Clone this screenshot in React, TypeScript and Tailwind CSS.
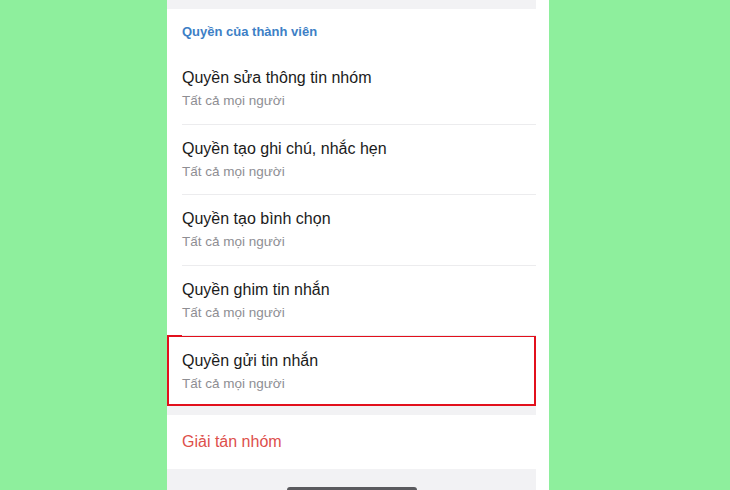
import React from 'react';

type Permission = { title: string; value: string; highlighted?: boolean };

const permissions: Permission[] = [
  { title: 'Quyền sửa thông tin nhóm', value: 'Tất cả mọi người' },
  { title: 'Quyền tạo ghi chú, nhắc hẹn', value: 'Tất cả mọi người' },
  { title: 'Quyền tạo bình chọn', value: 'Tất cả mọi người' },
  { title: 'Quyền ghim tin nhắn', value: 'Tất cả mọi người' },
  { title: 'Quyền gửi tin nhắn', value: 'Tất cả mọi người', highlighted: true },
];

const PermissionRow: React.FC<{ item: Permission; last: boolean }> = ({ item, last }) => (
  <div
    className={`h-[70.5px] flex flex-col ${
      item.highlighted ? 'border-2 border-[#e2101c] pl-[13px] -mt-px' : 'pl-[15px]'
    }`}
  >
    <div className={`flex-1 flex flex-col pt-[13px] ${!last && !item.highlighted ? 'border-b border-[#ececee]' : ''}`}>
      <span className="text-[16px] leading-[22px] text-[#1b1b1b]">{item.title}</span>
      <span className="text-[13.5px] leading-[18px] mt-[3px] text-[#8e8e93]">{item.value}</span>
    </div>
  </div>
);

const App: React.FC = () => {
  return (
    <div className="w-[730px] h-[490px] bg-[#8eef9d] flex pl-[167px] overflow-hidden font-['Liberation_Sans',sans-serif]">
      <div className="w-[382px] h-full bg-white flex">
        <div className="w-[369px] h-full flex flex-col bg-[#f2f2f4]">
          <div className="h-[9px]" />

          {/* members' permissions */}
          <div className="bg-white">
            <div className="h-[45px] pl-[15px] flex items-center">
              <span className="text-[13px] font-semibold text-[#3d7fc6]">Quyền của thành viên</span>
            </div>
            {permissions.map((p, i) => (
              <PermissionRow key={p.title} item={p} last={i === permissions.length - 1} />
            ))}
          </div>

          <div className="h-[9px]" />

          <div className="bg-white h-[54px] pl-[15px] flex items-center">
            <span className="text-[16px] text-[#dd4f4b]">Giải tán nhóm</span>
          </div>

          <div className="flex-1 flex items-end justify-center">
            <div className="w-[130px] h-[3px] rounded-t-full bg-[#5a5a5e]" />
          </div>
        </div>
      </div>
    </div>
  );
};

export default App;
